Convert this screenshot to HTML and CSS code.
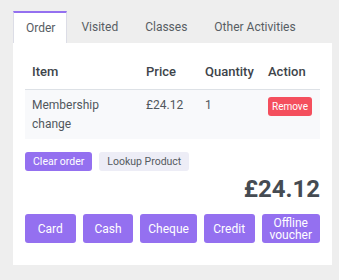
FILE: index.html
```html
<!DOCTYPE html>
<html lang="en">
<head>
    <meta charset="UTF-8">
    <meta name="viewport" content="width=device-width, initial-scale=1.0">
    <title>Order</title>
    <link rel="stylesheet" href="styles.css">
</head>
<body>
    <div class="order-box">
        <ul class="tabs">
            <li class="tab active">Order</li>
            <li class="tab">Visited</li>
            <li class="tab">Classes</li>
            <li class="tab">Other Activities</li>
        </ul>

        <div class="tab-content">
            <table class="order-table">
                <thead>
                    <tr>
                        <th class="col-item">Item</th>
                        <th class="col-price">Price</th>
                        <th class="col-qty">Quantity</th>
                        <th class="col-action">Action</th>
                    </tr>
                </thead>
                <tbody>
                    <tr>
                        <td>Membership change</td>
                        <td>£24.12</td>
                        <td>1</td>
                        <td><a class="btn-remove">Remove</a></td>
                    </tr>
                </tbody>
            </table>

            <div class="order-actions">
                <a class="btn-small primary">Clear order</a>
                <a class="btn-small light">Lookup Product</a>
            </div>

            <div class="order-total">£24.12</div>

            <div class="pay-buttons">
                <a class="btn-pay">Card</a>
                <a class="btn-pay">Cash</a>
                <a class="btn-pay">Cheque</a>
                <a class="btn-pay">Credit</a>
                <a class="btn-pay">Offline voucher</a>
            </div>
        </div>
    </div>
</body>
</html>
```

FILE: styles.css
```css
body {
    margin: 0;
    background-color: #eeeeee;
    font-family: Roboto, "Liberation Sans", sans-serif;
    color: #4a5056;
}

.order-box {
    width: 319px;
    margin: 11px 0 0 13px;
}

.tabs {
    display: flex;
    list-style: none;
    margin: 0;
    padding: 0;
}

.tab {
    height: 32px;
    line-height: 32px;
    padding: 0 13px;
    margin-right: 1px;
    font-size: 12px;
    color: #575d63;
    box-sizing: border-box;
}

.tab.active {
    background: white;
    border-top: 2px solid #9470f0;
    border-left: 1px solid #dcdde6;
    border-right: 1px solid #dcdde6;
    line-height: 30px;
    padding: 0 11px 0 12px;
}

.tab-content {
    background: white;
    padding: 12px 12px 22px;
}

.order-table {
    width: 100%;
    border-collapse: collapse;
    table-layout: fixed;
}

.order-table th,
.order-table td {
    box-sizing: border-box;
}

.order-table th {
    font-size: 13px;
    font-weight: 500;
    color: #3e444a;
    text-align: left;
    padding: 8px 7px;
    line-height: 18px;
    border-bottom: 1px solid #dde1e6;
}

.col-item { width: 114px; }
.col-price { width: 59px; }
.col-qty { width: 63px; }

.order-table td {
    font-size: 12px;
    line-height: 19px;
    padding: 6px 7px 5px;
    vertical-align: top;
    background: #f8f9fb;
    color: #51575d;
}

.btn-remove {
    display: inline-block;
    margin-top: 1px;
    background: #f44f5d;
    color: white;
    font-size: 10px;
    line-height: 19px;
    padding: 0 4px;
    border-radius: 3px;
}

.order-actions {
    display: flex;
    gap: 7px;
    margin-top: 13px;
}

.btn-small {
    font-size: 10.5px;
    line-height: 19px;
    padding: 0 8px;
    border-radius: 3px;
}

.btn-small.primary {
    background: #9470f0;
    color: white;
}

.btn-small.light {
    background: #ededf6;
    color: #555b61;
}

.order-total {
    text-align: right;
    font-size: 24px;
    font-weight: bold;
    line-height: 29px;
    color: #454b52;
    margin-top: 4px;
}

.pay-buttons {
    display: flex;
    gap: 7px;
    margin-top: 10px;
}

.btn-pay {
    flex: 1 1 0;
    height: 29px;
    display: flex;
    align-items: center;
    justify-content: center;
    text-align: center;
    padding: 0 8px;
    background: #9470f0;
    color: white;
    font-size: 12px;
    line-height: 12px;
    border-radius: 3px;
}
```
